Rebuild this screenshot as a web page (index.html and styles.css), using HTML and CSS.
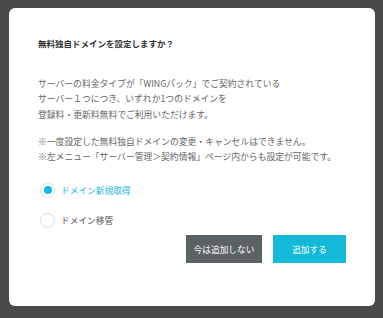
FILE: index.html
```html
<!DOCTYPE html>
<html lang="ja">
<head>
<meta charset="utf-8">
<link rel="stylesheet" href="styles.css">
</head>
<body>
<div class="modal">
  <h1 class="title">無料独自ドメインを設定しますか？</h1>
  <p class="text">サーバーの料金タイプが「WINGパック」でご契約されている<br>サーバー１つにつき、いずれか1つのドメインを<br>登録料・更新料無料でご利用いただけます。</p>
  <p class="text note">※一度設定した無料独自ドメインの変更・キャンセルはできません。<br>※左メニュー「サーバー管理＞契約情報」ページ内からも設定が可能です。</p>
  <div class="options">
    <label class="option checked"><span class="radio"></span><span>ドメイン新規取得</span></label>
    <label class="option"><span class="radio"></span><span>ドメイン移管</span></label>
  </div>
  <div class="actions">
    <button class="btn btn-gray">今は追加しない</button>
    <button class="btn btn-primary">追加する</button>
  </div>
</div>
</body>
</html>
```
FILE: styles.css
```css
html, body {
  margin: 0;
  padding: 0;
}
body {
  width: 383px;
  height: 318px;
  background: #4a4a4a;
  font-family: "Noto Sans CJK JP", "Noto Sans", sans-serif;
  overflow: hidden;
}
.modal {
  box-sizing: border-box;
  margin: 8px 0 0 9px;
  width: 366px;
  height: 298px;
  background: #fff;
  border-radius: 6px;
  padding: 28px 29px 0 29px;
}
.title {
  margin: 0;
  font-size: 8.5px;
  line-height: 15px;
  font-weight: bold;
  color: #333;
}
.text {
  margin: 25px 0 0;
  font-size: 8.8px;
  line-height: 15.3px;
  color: #666;
}
.note {
  margin-top: 12px;
}
.options {
  margin-top: 11px;
  display: flex;
  flex-direction: column;
}
.option {
  display: flex;
  align-items: center;
  height: 30px;
  font-size: 8.7px;
  color: #555;
  gap: 6px;
  padding-left: 2px;
}
.option.checked {
  color: #14b8d8;
}
.radio {
  box-sizing: border-box;
  width: 15px;
  height: 15px;
  border-radius: 50%;
  border: 1.5px solid #dcdcdc;
  display: flex;
  align-items: center;
  justify-content: center;
}
.option.checked .radio::after {
  content: "";
  width: 8px;
  height: 8px;
  border-radius: 50%;
  background: #14b8d8;
}
.actions {
  display: flex;
  justify-content: flex-end;
  gap: 11px;
}
.btn {
  border: 0;
  height: 28px;
  padding: 0;
  font-family: inherit;
  font-size: 8.7px;
  color: #fff;
}
.btn-gray {
  width: 76px;
  background: #5a6266;
}
.btn-primary {
  width: 73px;
  background: #14b8d8;
}
```
